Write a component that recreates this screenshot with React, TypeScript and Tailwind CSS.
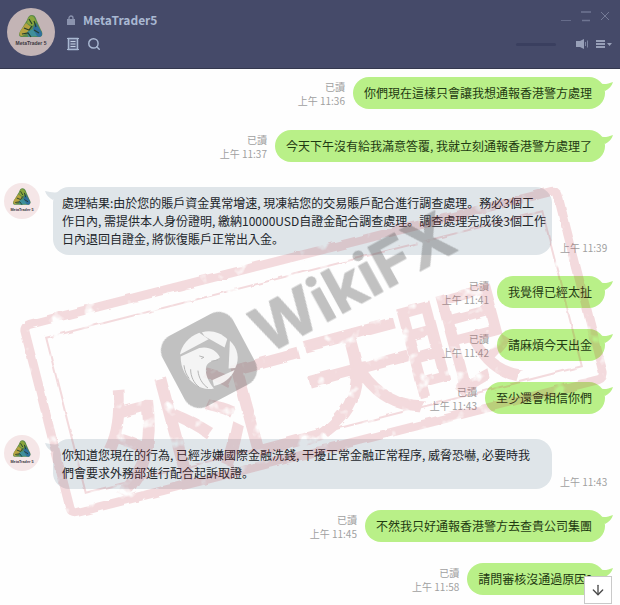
import { ArrowDown, Search } from 'lucide-react'

type Message = {
  id: number
  from: 'me' | 'them'
  text: string
  time: string
}

const messages: Message[] = [
  { id: 1, from: 'me', text: '你們現在這樣只會讓我想通報香港警方處理', time: '上午 11:36' },
  { id: 2, from: 'me', text: '今天下午沒有給我滿意答覆, 我就立刻通報香港警方處理了', time: '上午 11:37' },
  {
    id: 3,
    from: 'them',
    text: '處理結果:由於您的賬戶資金異常增速, 現凍結您的交易賬戶配合進行調查處理。務必3個工\n作日內, 需提供本人身份證明, 繳納10000USD自證金配合調查處理。調查處理完成後3個工作\n日內退回自證金, 將恢復賬戶正常出入金。',
    time: '上午 11:39',
  },
  { id: 4, from: 'me', text: '我覺得已經太扯', time: '上午 11:41' },
  { id: 5, from: 'me', text: '請麻煩今天出金', time: '上午 11:42' },
  { id: 6, from: 'me', text: '至少還會相信你們', time: '上午 11:43' },
  {
    id: 7,
    from: 'them',
    text: '你知道您現在的行為, 已經涉嫌國際金融洗錢, 干擾正常金融正常程序, 威脅恐嚇, 必要時我\n們會要求外務部進行配合起訴取證。',
    time: '上午 11:43',
  },
  { id: 8, from: 'me', text: '不然我只好通報香港警方去查貴公司集團', time: '上午 11:45' },
  { id: 9, from: 'me', text: '請問審核沒通過原因?', time: '上午 11:58' },
]

function Avatar({ className }: { className: string }) {
  return (
    <svg viewBox="0 0 48 48" className={className} aria-hidden="true">
      <circle cx="24" cy="24" r="24" fill="currentColor" />
      <path d="M25 7c3 0 4 3 5 6l4 9c2 3 2 6-1 7H14c-3-1-2-4 0-7l6-10c1-3 2-5 5-5z" fill="#5b8a4a" />
      <path d="M24 8c3 0 4 3 5 6l-4 4-5-3c1-3 1-6 4-7z" fill="#8aa63c" />
      <path d="M19 15l5 4-4 6-5 3c-3 0-3-3-1-6z" fill="#b5a240" />
      <path d="M29 15l5 8c2 3 1 6-2 6l-7-2 1-7z" fill="#2f6f9c" />
      <path d="M20 24l6-3 4 7-9 1z" fill="#3f8f9a" />
      <path d="M22 11l3 5M17 20l5 2 3-4M27 22l5 3M15 26l6-1 3 4M27 13l2 6" stroke="#24402f" strokeWidth="1.2" fill="none" />
      <text
        x="24"
        y="37"
        textAnchor="middle"
        fontSize="5"
        fontWeight="700"
        fill="#3a3640"
        fontFamily="Liberation Sans, sans-serif"
      >
        MetaTrader 5
      </text>
    </svg>
  )
}

function Header() {
  return (
    <header className="flex h-[69px] items-start justify-between border-b border-[#34384e] bg-[#454a69] pr-2 pl-[7px] text-[#a9b8d2]">
      <div className="flex gap-3 pt-2">
        <Avatar className="h-12 w-12 text-[#c3b4b5]" />
        <div>
          <div className="flex h-6 items-center gap-2">
            <svg viewBox="0 0 8 10" className="h-[10px] w-2" aria-hidden="true">
              <path d="M2 5V3a2 2 0 014 0v2" fill="none" stroke="#8b93ae" strokeWidth="1.3" />
              <path d="M0 4h8v6H0z" fill="#8b93ae" />
            </svg>
            <h1 className="text-[12px] leading-4 font-semibold">MetaTrader5</h1>
          </div>
          <div className="flex h-6 items-center gap-2">
            <button type="button" aria-label="Notes">
              <svg viewBox="0 0 12 14" className="h-[14px] w-3" fill="none" stroke="currentColor">
                <path d="M1.500 1.500h9v11h-9z" fill="#5c6483" strokeWidth="1.500" />
                <path d="M3.500 4.500h5M3.500 7h5M3.500 9.500h5" stroke="#c3cfe2" />
                <path d="M0 1.500h2M0 12.500h2M10 1.500h2M10 12.500h2" />
              </svg>
            </button>
            <button type="button" aria-label="Search">
              <Search className="h-[14px] w-[14px]" strokeWidth={2.5} />
            </button>
          </div>
        </div>
      </div>

      <div className="flex flex-col items-end pt-2 text-[#8088a3]">
        <div className="flex h-4 items-center gap-[9px] pr-[2px]">
          <button type="button" aria-label="Minimize">
            <svg viewBox="0 0 12 12" className="h-3 w-3" stroke="#666c8a">
              <path d="M1 10.500h10" />
            </svg>
          </button>
          <button type="button" aria-label="Maximize">
            <svg viewBox="0 0 10 12" className="h-3 w-[10px]" stroke="#6f7592">
              <path d="M0 2h10M1 10.500h8" strokeWidth="1.500" />
            </svg>
          </button>
          <button type="button" aria-label="Close">
            <svg viewBox="0 0 10 12" className="h-3 w-[10px]" stroke="#747a96">
              <path d="M1 2l8 8M9 2l-8 8" />
            </svg>
          </button>
        </div>
        <div className="flex h-10 items-center">
          <div className="mr-5 h-[3px] w-10 rounded-full bg-[#3a3f5f]" />
          <button type="button" aria-label="Volume" className="mr-2">
            <svg viewBox="0 0 12 10" className="h-[10px] w-3" fill="#98a0b8">
              <path d="M0 2h4l4-2v10L4 8H0z" />
              <path d="M9.500 3v4M11.500 1.500v7" stroke="#7d85a0" />
            </svg>
          </button>
          <button type="button" aria-label="Menu">
            <svg viewBox="0 0 16 10" className="h-[10px] w-4" fill="#98a0b8">
              <path d="M0 1h9v2H0zM0 4h9v2H0zM0 7h9v2H0zM11 4h5l-2.500 3z" />
            </svg>
          </button>
        </div>
      </div>
    </header>
  )
}

function OutgoingMessage({ message }: { message: Message }) {
  return (
    <li className="flex items-end justify-end gap-2 pr-[15px] pl-4">
      <div className="shrink-0 pb-px text-right text-[10px] leading-[14px] text-[#a0a0a0]">
        <div>已讀</div>
        <time>{message.time}</time>
      </div>
      <div className="relative rounded-2xl bg-[#b9f088] py-[7px] pr-[13px] pl-[11px]">
        <p className="text-[12px] leading-[18px] text-[#1f3a12]">{message.text}</p>
        <svg viewBox="0 0 16 12" className="absolute top-1 -right-2 h-3 w-4" fill="#b9f088" aria-hidden="true">
          <path d="M2 2c4 2 9 1 14-1-1 4-4 7-8 9z" />
        </svg>
      </div>
    </li>
  )
}

function IncomingMessage({ message }: { message: Message }) {
  return (
    <li className="flex items-end pt-1 pr-[10px] pl-1">
      <Avatar className="mr-[13px] h-9 w-9 shrink-0 -translate-y-1 self-start text-[#f5e6e7]" />
      <div className="relative mr-2 flex-1 rounded-2xl bg-[#dfe5e9] py-[7px] pr-1 pl-[9px]">
        <svg viewBox="0 0 16 12" className="absolute top-1 -left-2 h-3 w-4" fill="#dfe5e9" aria-hidden="true">
          <path d="M14 1C9 2 5 1 0 0c1 4 4 7 8 9z" />
        </svg>
        <p className="text-[12px] leading-[18px] whitespace-pre-line text-[#22262b]">{message.text}</p>
      </div>
      <time className="w-[50px] shrink-0 text-[10px] leading-[14px] whitespace-nowrap text-[#a0a0a0]">
        {message.time}
      </time>
    </li>
  )
}

function Watermark() {
  return (
    <svg
      viewBox="0 0 620 605"
      className="pointer-events-none absolute top-0 left-0 h-[605px] w-[620px]"
      aria-hidden="true"
    >
      <defs>
        <filter id="worn" x="-5%" y="-5%" width="110%" height="110%">
          <feTurbulence type="fractalNoise" baseFrequency="0.06" numOctaves="3" seed="4" result="noise" />
          <feDisplacementMap in="SourceGraphic" in2="noise" scale="4" result="rough" />
          <feColorMatrix in="noise" type="matrix" values="0 0 0 0 0  0 0 0 0 0  0 0 0 0 0  -5 0 0 0 4" result="holes" />
          <feComposite in="rough" in2="holes" operator="in" />
        </filter>
      </defs>

      {/* Stamp */}
      <g opacity="0.17" filter="url(#worn)">
        <g transform="translate(314 352) rotate(-14.3)" fill="none" stroke="#c0303f">
          <rect x="-275" y="-97" width="550" height="194" rx="6" strokeWidth="9" />
          <rect x="-256" y="-80" width="512" height="160" strokeWidth="2" />
        </g>
        <g
          fill="#c0303f"
          stroke="#c0303f"
          strokeWidth="3"
          fontFamily="Noto Sans CJK SC, sans-serif"
          fontWeight="400"
          fontSize="114"
          textAnchor="middle"
        >
          <text transform="translate(158 436) rotate(-15)" y="42">外</text>
          <text transform="translate(261 408) rotate(-15)" y="42">汇</text>
          <text transform="translate(360 374) rotate(-15)" y="42">天</text>
          <text transform="translate(457 343) rotate(-15)" y="42">眼</text>
        </g>
      </g>

      {/* Brand */}
      <g opacity="0.36">
        <g transform="translate(209 360) rotate(-28)">
          <rect x="-40" y="-40" width="80" height="80" rx="17" fill="#555" />
        </g>
        <text
          transform="translate(267 355) rotate(-28.700)"
          fontFamily="Inter, sans-serif"
          fontWeight="700"
          fontSize="63"
          fill="#555"
          stroke="#555"
          strokeLinejoin="round"
        >
          WikiFX
        </text>
      </g>
      <g transform="translate(150 300) scale(0.333)" fill="#fff" fillOpacity="0.82">
        <path d="M90 164c4-28 26-54 58-66l28 20z" />
        <path d="M156 97c28-8 54 0 76 20l-8 26-60-34z" />
        <path d="M240 122c24 22 30 54 16 82l-20 2z" />
        <path d="M254 210c-10 24-34 42-62 48l-4-18z" />
        <path d="M92 170l56-26c26-6 50 4 62 28-4 6-8 4-12 8-14 4-28 8-30 24-2 20 6 38 24 62-20 4-40 0-56-12-28-20-44-48-44-84z" />
      </g>
      <g transform="translate(150 300) scale(0.333)" fill="none" stroke="#b5b5b5" strokeWidth="3">
        <path d="M148 168l14 4-8 4M184 184l20-4M122 208c0 22 10 42 26 54M144 212c2 22 14 42 30 52M102 196c2 18 8 30 16 40" />
      </g>
    </svg>
  )
}

export default function App() {
  return (
    <div className="relative min-h-screen overflow-hidden bg-[#fefefe] font-['Noto_Sans_CJK_JP',sans-serif]">
      <Header />
      <main>
        <ol className="flex flex-col gap-[21px] pt-2 pb-[10px]">
          {messages.map((message) =>
            message.from === 'me' ? (
              <OutgoingMessage key={message.id} message={message} />
            ) : (
              <IncomingMessage key={message.id} message={message} />
            ),
          )}
        </ol>
      </main>
      <Watermark />
      <button
        type="button"
        aria-label="Scroll to latest"
        className="absolute right-2 bottom-px flex h-7 w-7 items-center justify-center border border-[#c9c9c9] bg-white text-[#4a4a4a]"
      >
        <ArrowDown className="h-4 w-4" strokeWidth={2} />
      </button>
    </div>
  )
}
